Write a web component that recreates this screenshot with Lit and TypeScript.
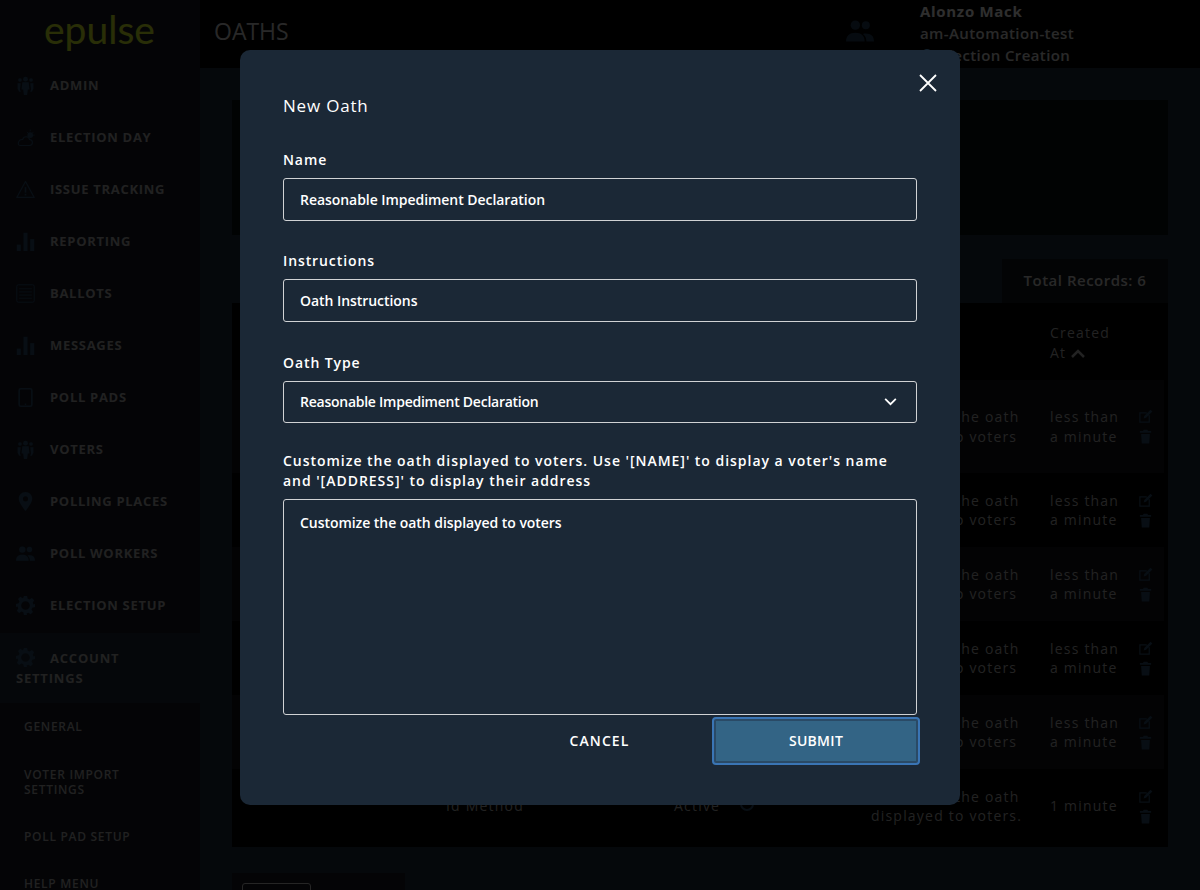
import { LitElement, html, css, svg } from 'lit';
import { customElement } from 'lit/decorators.js';

const people = svg`<circle cx="8" cy="7" r="4"/><circle cx="17" cy="7" r="3.4"/><path d="M0 21c0-5 3-7.500 8-7.500s8 2.500 8 7.500z"/><path d="M17.500 21H24c0-4.500-2.500-6.800-7-6.800-1 0-1.800.1-2.500.3 2 1.400 3 3.600 3 6.500z"/>`;
const crowd = svg`<circle cx="12" cy="4" r="3"/><circle cx="5" cy="5" r="2.300"/><circle cx="19" cy="5" r="2.300"/><path d="M8 8h8l1 9h-2l-1 7h-4l-1-7H7z"/><path d="M2 9h4l-1 8 1 3H4l-2-4zM18 9h4v7l-2 4h-2l1-3z"/>`;
const bars = svg`<rect x="1" y="16" width="5" height="8"/><rect x="9.500" y="1" width="5" height="23"/><rect x="18" y="9" width="5" height="15"/>`;
const gear = svg`<path fill-rule="evenodd" d="M10 0h4l.8 3.400 2.300 1 3-1.800 2.800 2.800-1.800 3 1 2.300L24 10v4l-3.400.8-1 2.300 1.800 3-2.800 2.800-3-1.800-2.300 1L14 24h-4l-.8-3.400-2.300-1-3 1.800-2.800-2.800 1.800-3-1-2.300L0 14v-4l3.400-.8 1-2.300-1.800-3L5.400 1.100l3 1.800 1-1zM12 6.500a5.500 5.500 0 1 0 0 11 5.500 5.500 0 0 0 0-11z"/>`;

const icons: Record<string, unknown> = {
  crowd,
  bars,
  gear,
  people,
  cloud: svg`<path fill="none" stroke="currentColor" stroke-width="1.300" d="M5 22h12c5 0 5-7 0-7.500C16 10 9.500 10 8.500 14.500 3 13.500 1 22 5 22z"/><circle cx="18" cy="9" r="3.500"/><path fill="none" stroke="currentColor" d="M18 2v2M23.500 9h-2M22 5l-1.500 1.500M14 5l1.500 1.500"/>`,
  warning: svg`<path fill="none" stroke="currentColor" stroke-width="1.500" stroke-linejoin="round" d="M12 2 1 22h22z"/><rect x="11" y="9" width="2" height="7"/><rect x="11" y="17.500" width="2" height="2"/>`,
  ballot: svg`<rect x="1" y="1" width="22" height="22" rx="2" fill="none" stroke="currentColor" stroke-width="1.200"/><path stroke="currentColor" d="M4 6h16M4 10h16M4 14h16M4 18h16"/>`,
  tablet: svg`<rect x="4" y="1" width="16" height="22" rx="2" fill="none" stroke="currentColor" stroke-width="2"/><circle cx="12" cy="20.500" r="1"/>`,
  pin: svg`<path fill-rule="evenodd" d="M12 0c-5 0-8.500 3.700-8.500 8.500C3.500 14 12 24 12 24s8.500-10 8.500-15.500C20.500 3.700 17 0 12 0zm0 5.500a3.200 3.200 0 1 1 0 6.400 3.200 3.200 0 0 1 0-6.400z"/>`,
};

const navItems = [
  ['ADMIN', 'crowd'],
  ['ELECTION DAY', 'cloud'],
  ['ISSUE TRACKING', 'warning'],
  ['REPORTING', 'bars'],
  ['BALLOTS', 'ballot'],
  ['MESSAGES', 'bars'],
  ['POLL PADS', 'tablet'],
  ['VOTERS', 'crowd'],
  ['POLLING PLACES', 'pin'],
  ['POLL WORKERS', 'people'],
  ['ELECTION SETUP', 'gear'],
];

const subItems = ['GENERAL', 'VOTER IMPORT SETTINGS', 'POLL PAD SETUP', 'HELP MENU'];

const rows = [
  { h: 93, created: 'less than a minute', period: '' },
  { h: 74, created: 'less than a minute', period: '' },
  { h: 74, created: 'less than a minute', period: '' },
  { h: 74, created: 'less than a minute', period: '' },
  { h: 74, created: 'less than a minute', period: '' },
  { h: 74, created: '1 minute', period: '.' },
];

@customElement('app-root')
export class AppRoot extends LitElement {
  static styles = css`
    :host {
      display: block;
      position: relative;
      width: 1200px;
      height: 890px;
      overflow: hidden;
      font-family: 'Open Sans', 'DejaVu Sans', sans-serif;
      color: #fff;
    }
    .page {
      display: flex;
      height: 890px;
      background: #1c2c3c;
    }
    .sidebar {
      flex: 0 0 200px;
      height: 890px;
      overflow: hidden;
      background: #161b26;
      color: #b4b4b4;
    }
    .logo {
      height: 59px;
      padding-left: 44px;
      font-family: 'Lato', sans-serif;
      font-weight: 400;
      font-size: 39px;
      line-height: 58px;
      color: #e0ff28;
    }
    .nav {
      display: flex;
      align-items: center;
      gap: 15px;
      height: 52px;
      padding-left: 16px;
      font-size: 13px;
      font-weight: 700;
      letter-spacing: 0.7px;
    }
    .nav svg {
      flex: none;
      width: 19px;
      height: 19px;
      fill: currentColor;
      color: #2c5070;
    }
    .nav-list {
      height: 574px;
    }
    .account {
      height: 70px;
      padding: 15px 16px 0;
      box-sizing: border-box;
      background: #1e2a38;
      font-size: 13px;
      font-weight: 700;
      letter-spacing: 0.8px;
      line-height: 20px;
    }
    .account svg {
      width: 19px;
      height: 19px;
      margin-right: 15px;
      vertical-align: -4px;
      fill: currentColor;
      color: #2c5070;
    }
    .sub {
      padding: 12px 24px 0;
      font-size: 12px;
      font-weight: 600;
      letter-spacing: 0.7px;
      line-height: 15px;
    }
    .sub div {
      width: 130px;
      padding: 4px 0 28px;
    }
    .sub div:first-child {
      padding-bottom: 29px;
    }
    .main {
      flex: 1;
      min-width: 0;
    }
    .top {
      display: flex;
      height: 68px;
      background: #000;
    }
    .title {
      flex: 1;
      padding-left: 14px;
      font-size: 23px;
      line-height: 62px;
      color: #ddd;
    }
    .avatar {
      width: 28px;
      height: 25px;
      margin: 17px 46px 0 0;
      fill: currentColor;
      color: #24405a;
    }
    .user {
      width: 280px;
      font-size: 15px;
      line-height: 22px;
      letter-spacing: 0.4px;
      font-weight: 600;
      color: #e4e4e4;
    }
    .user b {
      display: block;
      font-weight: 700;
      letter-spacing: 0.7px;
      color: #fff;
    }
    .user svg {
      width: 14px;
      height: 14px;
      margin-right: 6px;
      fill: #5fa8e0;
      vertical-align: -2px;
    }
    .content {
      padding: 32px 32px 0;
    }
    .card {
      height: 135px;
      background: #0a1212;
    }
    .total {
      width: 166px;
      height: 44px;
      margin: 24px 0 0 auto;
      background: #14181c;
      text-align: center;
      font-size: 15px;
      line-height: 42px;
      letter-spacing: 0.5px;
      font-weight: 600;
      color: #ddd;
    }
    .table {
      height: 544px;
      background: #000;
      color: #bbb;
      font-size: 14px;
      line-height: 19.500px;
      letter-spacing: 1.200px;
    }
    .thead {
      height: 77px;
      padding-left: 818px;
      padding-top: 20px;
      box-sizing: border-box;
    }
    .thead div {
      width: 70px;
    }
    .thead svg {
      width: 14px;
      height: 9px;
      fill: none;
      stroke: currentColor;
      stroke-width: 2.500;
    }
    .row {
      display: grid;
      grid-template-columns: 214px 228px 66px 131px 179px 87px 16px;
      align-items: center;
      width: 932px;
    }
    .row:nth-child(odd) {
      background: #12121a;
    }
    .created {
      max-width: 72px;
    }
    .actions {
      display: flex;
      flex-direction: column;
      align-items: center;
      gap: 5px;
      width: 16px;
    }
    .actions svg {
      width: 15px;
      height: 15px;
      fill: #2c5070;
    }
    .check {
      width: 14px;
      height: 14px;
      fill: none;
      stroke: #2c5070;
      stroke-width: 2;
    }
    .pager {
      width: 173px;
      height: 60px;
      margin-top: 26px;
      padding: 10px 10px 0;
      box-sizing: border-box;
      background: #1a1a22;
    }
    .pager div {
      width: 69px;
      height: 40px;
      border: 1px solid #ccc;
      border-radius: 3px;
      box-sizing: border-box;
    }
    .scrim {
      position: absolute;
      inset: 0;
      background: rgba(0, 0, 0, 0.82);
    }
    .modal {
      position: absolute;
      left: 240px;
      top: 50px;
      width: 720px;
      height: 755px;
      box-sizing: border-box;
      padding: 44px 43px 0;
      background: #1b2836;
      border-radius: 10px;
    }
    .close {
      position: absolute;
      top: 24px;
      right: 23px;
      width: 18px;
      height: 18px;
      stroke: #fff;
      stroke-width: 1.800;
    }
    h2 {
      margin: 0 0 33px;
      font-size: 17px;
      font-weight: 400;
      line-height: 23px;
      letter-spacing: 0.8px;
    }
    label {
      display: block;
      margin-bottom: 8px;
      font-size: 14px;
      font-weight: 600;
      line-height: 20px;
      letter-spacing: 0.9px;
    }
    label.long {
      letter-spacing: 0.97px;
    }
    .field {
      display: flex;
      align-items: center;
      justify-content: space-between;
      box-sizing: border-box;
      height: 43px;
      margin-bottom: 30px;
      padding: 0 16px;
      border: 1px solid #d0d2d4;
      border-radius: 3px;
      font-size: 14px;
      font-weight: 600;
      letter-spacing: -0.05px;
    }
    .field.instructions {
      margin-bottom: 31px;
    }
    .field.select {
      height: 42px;
      margin-bottom: 28px;
      padding-right: 19px;
      padding-bottom: 1px;
      letter-spacing: -0.25px;
    }
    .field.select svg {
      width: 13px;
      height: 8px;
      fill: none;
      stroke: #fff;
      stroke-width: 2;
    }
    .field.area {
      align-items: flex-start;
      height: 216px;
      margin-bottom: 2px;
      padding-top: 13px;
    }
    .buttons {
      display: flex;
      justify-content: flex-end;
      width: 637px;
    }
    button {
      box-sizing: border-box;
      height: 48px;
      padding-bottom: 2px;
      font: 600 14px 'Open Sans', sans-serif;
      color: #fff;
      border: none;
      background: none;
    }
    .cancel {
      width: 207px;
      margin-right: 9px;
      letter-spacing: 1.100px;
    }
    .submit {
      width: 208px;
      background: #336485;
      letter-spacing: 0.3px;
      border: 1px solid #16304a;
      outline: 2px solid #3a75b5;
      outline-offset: -2px;
      border-radius: 4px;
      box-shadow: inset 0 0 0 3px #2a4a66;
    }
  `;

  private navRow(label: string, icon: string) {
    return html`<div class="nav">
      <svg viewBox="0 0 24 24">${icons[icon]}</svg><span>${label}</span>
    </div>`;
  }

  render() {
    return html`
      <div class="page">
        <aside class="sidebar">
          <div class="logo">epulse</div>
          <div class="nav-list">${navItems.map(([label, icon]) => this.navRow(label, icon))}</div>
          <div class="account">
            <svg viewBox="0 0 24 24">${gear}</svg>ACCOUNT SETTINGS
          </div>
          <div class="sub">${subItems.map((s) => html`<div>${s}</div>`)}</div>
        </aside>
        <main class="main">
          <header class="top">
            <div class="title">OATHS</div>
            <svg class="avatar" viewBox="0 0 24 21.400" preserveAspectRatio="none">${people}</svg>
            <div class="user">
              <b>Alonzo Mack</b>
              <div>am-Automation-test</div>
              <div><svg viewBox="0 0 24 24">${icons.pin}</svg>Election Creation</div>
            </div>
          </header>
          <div class="content">
            <div class="card"></div>
            <div class="total">Total Records: 6</div>
            <div class="table">
              <div class="thead">
                <div>Created At <svg viewBox="0 0 14 9"><path d="M1 8l6-6 6 6" /></svg></div>
              </div>
              <div>
                ${rows.map(
                  (r) => html`<div class="row" style="height:${r.h}px">
                    <span></span>
                    <span>Id Method</span>
                    <span>Active</span>
                    <span><svg class="check" viewBox="0 0 14 14"><circle cx="7" cy="7" r="6" /></svg></span>
                    <span>Customize the oath displayed to voters${r.period}</span>
                    <span class="created">${r.created}</span>
                    <span class="actions">
                      <svg viewBox="0 0 24 24"><path d="M2 5h12v2H4v13h13V10h2v12H2zM20 1l3 3-10 10-4 1 1-4z" /></svg>
                      <svg viewBox="0 0 24 24"><path d="M9 1h6l1 2h5v3H3V3h5zM5 8h14l-1 15H6z" /></svg>
                    </span>
                  </div>`,
                )}
              </div>
            </div>
            <div class="pager"><div></div></div>
          </div>
        </main>
      </div>
      <div class="scrim"></div>
      <section class="modal">
        <svg class="close" viewBox="0 0 18 18"><path d="M1 1l16 16M17 1L1 17" /></svg>
        <h2>New Oath</h2>
        <label>Name</label>
        <div class="field">Reasonable Impediment Declaration</div>
        <label>Instructions</label>
        <div class="field instructions">Oath Instructions</div>
        <label>Oath Type</label>
        <div class="field select">
          Reasonable Impediment Declaration
          <svg viewBox="0 0 14 9"><path d="M1 1l6 6 6-6" /></svg>
        </div>
        <label class="long">Customize the oath displayed to voters. Use '[NAME]' to display a voter's name and '[ADDRESS]' to display their address</label>
        <div class="field area">Customize the oath displayed to voters</div>
        <div class="buttons">
          <button class="cancel">CANCEL</button>
          <button class="submit">SUBMIT</button>
        </div>
      </section>
    `;
  }
}
